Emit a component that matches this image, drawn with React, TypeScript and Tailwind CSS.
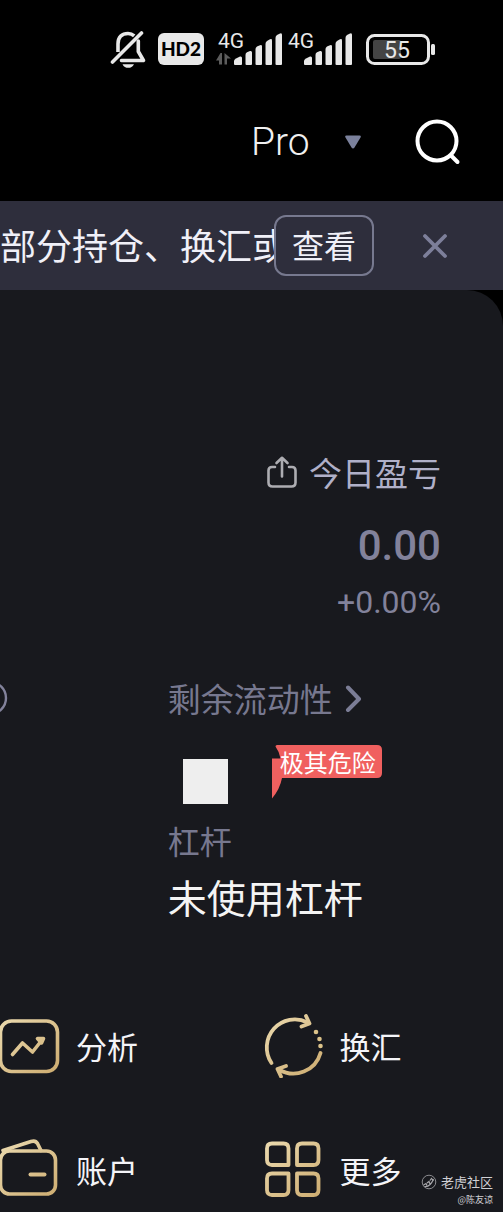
import React from 'react';

function MutedBellIcon() {
  return (
    <svg className="h-10 w-9" viewBox="0 0 36 40" fill="none" stroke="#e8e8e8" strokeWidth="3.6" aria-hidden="true">
      <path d="M8 23V15C8 8 12 4.500 18 4.500C20.500 4.500 22.500 5.300 24.200 6.800" />
      <path d="M2.500 33L31.500 4" strokeLinecap="round" />
      <path d="M28.300 12V22.500L33.500 31.500H11.500" strokeLinejoin="round" strokeLinecap="round" />
      <path d="M12.500 35.200H24C22.500 37.800 20.800 38.800 18.200 38.800C15.700 38.800 13.800 37.800 12.500 35.200Z" fill="#e8e8e8" stroke="none" />
    </svg>
  );
}

function SignalIcon({ active }: { active?: boolean }) {
  return (
    <svg className="h-9 w-[70px] overflow-visible" viewBox="0 0 70 36" fill="#e8e8e8" aria-hidden="true">
      <text x="2" y="17" fontSize="21" fontWeight="400" fontFamily="Roboto, sans-serif">4G</text>
      {active && (
        <path d="M4.500 22L0 29.500H3V33.500H6V22ZM8.500 22V33.500H11V27.500H15Z" fill="#5c5c5c" />
      )}
      <path d="M18 33V30Q18 28.500 20 27.500L24 25.500Q26 25 26 27V33Q26 34 25 34H19Q18 34 18 33Z" />
      <path d="M29.500 33V24Q29.500 22 31 21.300L34 20Q36 19.500 36 21.500V33Q36 34 35 34H30.500Q29.500 34 29.500 33Z" />
      <path d="M39.500 33V18Q39.500 16.500 41 15.500L44 14.200Q46 13.500 46 15.500V33Q46 34 45 34H40.500Q39.500 34 39.500 33Z" />
      <path d="M49.500 33V13Q49.500 11 51 10L54 8.300Q56 7.500 56 9.500V33Q56 34 55 34H50.500Q49.500 34 49.500 33Z" />
      <path d="M59.500 33V7Q59.500 5 61 4L64 2.500Q66 1.500 66 4V33Q66 34 65 34H60.500Q59.500 34 59.500 33Z" />
    </svg>
  );
}

function BatteryIcon({ level }: { level: number }) {
  return (
    <svg className="h-8 w-[69px]" viewBox="0 0 69 32" aria-hidden="true">
      <rect x="1.500" y="2.500" width="61" height="28" rx="7" fill="none" stroke="#e8e8e8" strokeWidth="3" />
      <rect x="7" y="7" width="28" height="19" rx="2" fill="#444" />
      <rect x="65" y="11" width="4" height="11" rx="1.500" fill="#e8e8e8" />
      <text x="31" y="24.500" fontSize="23" fontWeight="400" textAnchor="middle" fill="#e8e8e8" fontFamily="Roboto, sans-serif">{level}</text>
    </svg>
  );
}

function SearchIcon() {
  return (
    <svg className="h-12 w-12" viewBox="0 0 48 48" fill="none" stroke="#fff" strokeWidth="4" strokeLinecap="round" aria-hidden="true">
      <circle cx="22" cy="23" r="19.500" />
      <path d="M36 37.500L42.500 44" />
    </svg>
  );
}

function CloseIcon() {
  return (
    <svg className="h-[26px] w-[26px]" viewBox="0 0 26 26" fill="none" stroke="#7d7f9a" strokeWidth="3.800" strokeLinecap="round" aria-hidden="true">
      <path d="M3 3L23 23M23 3L3 23" />
    </svg>
  );
}

function ShareIcon() {
  return (
    <svg className="h-8 w-[30px]" viewBox="0 0 30 32" fill="none" stroke="#adadb2" strokeWidth="2.600" strokeLinecap="round" strokeLinejoin="round" aria-hidden="true">
      <path d="M8 11H5Q1.500 11 1.500 14.500V26.500Q1.500 30.500 5.500 30.500H24.500Q28.500 30.500 28.500 26.500V14.500Q28.500 11 25 11H22" />
      <path d="M15 20.500V2M9.500 7L15 1.800L20.500 7" />
    </svg>
  );
}

function GoldGradient({ id }: { id: string }) {
  return (
    <defs>
      <linearGradient id={id} gradientUnits="userSpaceOnUse" x1="0" y1="0" x2="60" y2="64">
        <stop offset="0" stopColor="#ecdcb2" />
        <stop offset="1" stopColor="#cba96c" />
      </linearGradient>
    </defs>
  );
}

const goldIcon = 'h-16 w-[60px] shrink-0';

function AnalysisIcon() {
  return (
    <svg className={goldIcon} viewBox="0 0 60 64" fill="none" stroke="url(#gold-analysis)" strokeWidth="3.600" strokeLinecap="round" strokeLinejoin="round" aria-hidden="true">
      <GoldGradient id="gold-analysis" />
      <rect x="0.500" y="7" width="57" height="50.500" rx="11" />
      <path d="M12.500 40.500L22.500 29L32.500 38L42 26" />
      <path d="M37.500 24.500H43.500L41.500 29Z" />
    </svg>
  );
}

function ExchangeIcon() {
  return (
    <svg className={goldIcon} viewBox="0 0 60 64" fill="none" stroke="url(#gold-exchange)" strokeWidth="3.800" strokeLinecap="round" strokeLinejoin="round" aria-hidden="true">
      <GoldGradient id="gold-exchange" />
      <path d="M7.500 49A28 28 0 0 1 43.500 8.500" />
      <path d="M42 2L45.500 9.500L37.500 12.500" />
      <path d="M56.500 39A28 28 0 0 1 15 55.500" />
      <path d="M22 52L13.500 55L17 62.500" />
      <g fill="#dcc38a" stroke="none">
        <circle cx="52" cy="18" r="2.300" />
        <circle cx="55.500" cy="25" r="2.300" />
        <circle cx="56.500" cy="32" r="2.300" />
      </g>
    </svg>
  );
}

function WalletIcon() {
  return (
    <svg className={goldIcon} viewBox="0 0 60 64" fill="none" stroke="url(#gold-wallet)" strokeWidth="3.600" strokeLinecap="round" strokeLinejoin="round" aria-hidden="true">
      <GoldGradient id="gold-wallet" />
      <rect x="0.500" y="13" width="55" height="43" rx="9" />
      <path d="M3 12.500L31 3.500Q35.500 2 37.500 5.500L41 12.500" />
      <path d="M30.500 36.500H44.500" strokeWidth="4" />
    </svg>
  );
}

function MoreIcon() {
  return (
    <svg className={goldIcon} viewBox="0 0 60 64" fill="none" stroke="url(#gold-more)" strokeWidth="3.800" strokeLinejoin="round" aria-hidden="true">
      <GoldGradient id="gold-more" />
      <path d="M8 5.500H19.500Q24.500 5.500 24.500 10.500V27H8Q3 27 3 22V10.500Q3 5.500 8 5.500Z" />
      <path d="M38 5.500H49.500Q54.500 5.500 54.500 10.500V22Q54.500 27 49.500 27H33V10.500Q33 5.500 38 5.500Z" />
      <path d="M8 35.500H24.500V52Q24.500 57 19.500 57H8Q3 57 3 52V40.500Q3 35.500 8 35.500Z" />
      <path d="M33 35.500H49.500Q54.500 35.500 54.500 40.500V52Q54.500 57 49.500 57H38Q33 57 33 52Z" />
    </svg>
  );
}

const actions = [
  { label: '分析', Icon: AnalysisIcon },
  { label: '换汇', Icon: ExchangeIcon },
  { label: '账户', Icon: WalletIcon },
  { label: '更多', Icon: MoreIcon },
];

function StatusBar() {
  return (
    <div className="flex h-[98px] items-center justify-end pr-[68px]">
      <MutedBellIcon />
      <span className="ml-3 mr-3 flex h-8 w-[46px] items-center justify-center rounded-md bg-[#e8e8e8] font-['Lato','Noto_Sans_CJK_SC',sans-serif] text-[19px] font-black leading-8 text-black">
        HD2
      </span>
      <SignalIcon active />
      <SignalIcon />
      <span className="ml-2.5">
        <BatteryIcon level={55} />
      </span>
    </div>
  );
}

function TopBar() {
  return (
    <div className="flex h-[103px] items-center justify-end pb-4 pr-10">
      <div className="relative mr-[54px]">
        <select
          aria-label="版本"
          className="w-[110px] appearance-none bg-transparent font-['Roboto',sans-serif] text-[39px] font-light leading-[48px] text-[#f0f0f0]"
        >
          <option>Pro</option>
        </select>
        <svg className="pointer-events-none absolute right-0 top-1/2 h-3.5 w-4 -translate-y-1/2" viewBox="0 0 16 14" fill="#7b819c" aria-hidden="true">
          <path d="M1.500 0.500H14.500Q16.500 0.500 15.500 2.500L9.500 12.500Q8 14.500 6.500 12.500L0.500 2.500Q-0.500 0.500 1.500 0.500Z" />
        </svg>
      </div>
      <button aria-label="搜索">
        <SearchIcon />
      </button>
    </div>
  );
}

function Notice() {
  return (
    <div className="flex h-[89px] items-center bg-[#2e2e3c] pr-[55px]">
      <p className="min-w-0 flex-1 overflow-hidden whitespace-nowrap pb-1 text-[36px] leading-[56px] text-[#f0f0f8]">
        部分持仓、换汇或
      </p>
      <button className="h-[61px] w-[100px] shrink-0 rounded-xl border-2 border-[#77798f] pb-1 text-[32px] leading-[48px] text-[#f0f0f8]">
        查看
      </button>
      <button aria-label="关闭" className="ml-12 shrink-0">
        <CloseIcon />
      </button>
    </div>
  );
}

function DangerBadge() {
  return (
    <div className="relative ml-11 h-[60px] w-[110px]">
      <svg className="absolute inset-0 h-[60px] w-[110px]" viewBox="0 0 110 60" fill="#f0605f" aria-hidden="true">
        <path d="M5 1H105Q110 1 110 6V29Q110 34 105 34H10Q8 45 0 54.500V14.500H8.500Q7.500 8 3.500 2.500Q3.500 1 5 1Z" />
      </svg>
      <span className="relative block pl-2 text-[24px] leading-[36px] text-white">极其危险</span>
    </div>
  );
}

function App() {
  return (
    <div className="relative flex min-h-screen flex-col overflow-hidden bg-black font-['Noto_Sans_CJK_SC',sans-serif]">
      <header>
        <StatusBar />
        <TopBar />
      </header>
      <Notice />

      <main className="flex-1 rounded-tr-[36px] bg-[#18191e] pb-1.5 pt-40">
        <section className="flex flex-col items-end pr-[62px]">
          <div className="flex h-11 items-center gap-3">
            <button aria-label="分享">
              <ShareIcon />
            </button>
            <h2 className="text-[33px] leading-[44px] text-[#b0b0c8]">今日盈亏</h2>
          </div>
          <p className="mt-7 font-['Roboto',sans-serif] text-[42px] font-medium leading-[48px] text-[#82829b]">0.00</p>
          <p className="mt-3 font-['Roboto',sans-serif] text-[32px] leading-[40px] text-[#82829b]">+0.00%</p>
        </section>

        <section className="mt-14 grid grid-cols-[1fr_2fr]">
          <div>
            <svg className="-ml-7 mt-1 h-9 w-9" viewBox="0 0 36 36" fill="none" stroke="#82829b" strokeWidth="2.400" aria-hidden="true">
              <circle cx="18" cy="16" r="16" />
            </svg>
          </div>
          <div>
            <a href="#liquidity" className="flex items-center gap-3 text-[33px] leading-[40px] text-[#77788f]">
              剩余流动性
              <svg className="h-7 w-5" viewBox="0 0 20 28" fill="none" stroke="#7b7d96" strokeWidth="4" strokeLinecap="round" strokeLinejoin="round" aria-hidden="true">
                <path d="M3 3.500L14 15L3 26" />
              </svg>
            </a>
            <div className="mt-[26px] flex items-end">
              <div className="ml-[15px] h-[45px] w-[45px] bg-[#eee]" />
              <DangerBadge />
            </div>
            <h3 className="mt-4 text-[32px] leading-[40px] text-[#77788f]">杠杆</h3>
            <p className="mt-3 text-[39px] leading-[48px] text-[#f4f4f4]">未使用杠杆</p>
          </div>
        </section>

        <nav className="mt-[94px] grid grid-cols-2 gap-x-6 gap-y-[60px]">
          {actions.map(({ label, Icon }) => (
            <button key={label} className="flex h-16 items-center gap-4 text-left text-[31px] leading-[40px] text-[#f4f4f8]">
              <Icon />
              {label}
            </button>
          ))}
        </nav>
      </main>

      <div className="absolute bottom-1 right-2.5 flex flex-col items-end text-[#d0d0d4]">
        <div className="flex items-center gap-1 text-[13px] leading-5">
          <svg className="h-4 w-4" viewBox="0 0 16 16" fill="none" stroke="#a8a8ac" aria-hidden="true">
            <circle cx="8" cy="8" r="6.800" strokeWidth="0.800" />
            <path d="M2.500 11L5 9.500L6 11.500M6 9L8 7.500L9 10M9 6.500L10.500 4.500L12.500 7M3.500 12.500Q9 13.500 12.500 5" strokeWidth="1.200" />
          </svg>
          老虎社区
        </div>
        <span className="text-[9px] leading-4">@陈友谅</span>
      </div>
    </div>
  );
}

export default App;
